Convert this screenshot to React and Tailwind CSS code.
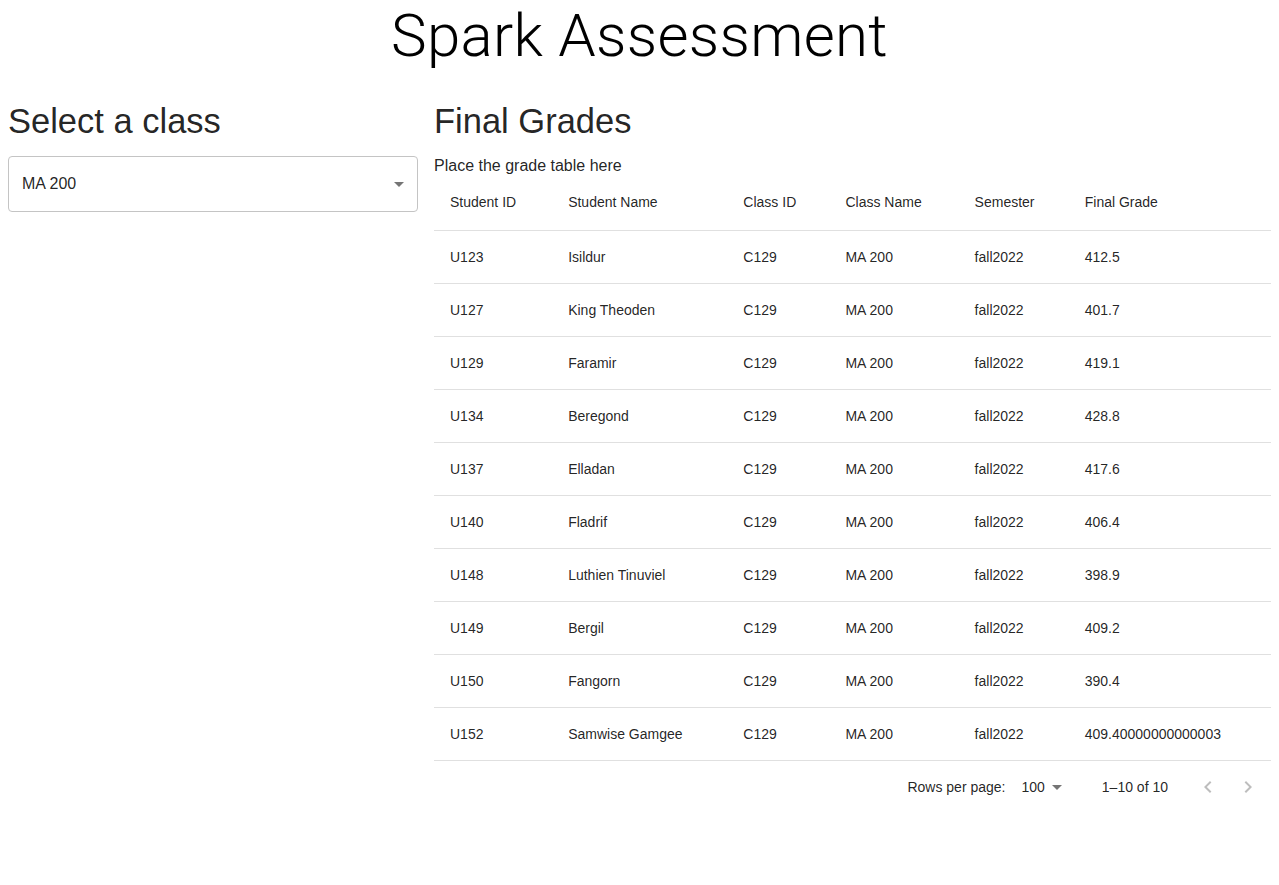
import React from "react";

const rows = [
  ["U123", "Isildur", "412.5"],
  ["U127", "King Theoden", "401.7"],
  ["U129", "Faramir", "419.1"],
  ["U134", "Beregond", "428.8"],
  ["U137", "Elladan", "417.6"],
  ["U140", "Fladrif", "406.4"],
  ["U148", "Luthien Tinuviel", "398.9"],
  ["U149", "Bergil", "409.2"],
  ["U150", "Fangorn", "390.4"],
  ["U152", "Samwise Gamgee", "409.40000000000003"],
];

const cols = [
  { label: "Student ID", w: "w-[118px]" },
  { label: "Student Name", w: "w-[175px]" },
  { label: "Class ID", w: "w-[102px]" },
  { label: "Class Name", w: "w-[129px]" },
  { label: "Semester", w: "w-[110px]" },
  { label: "Final Grade", w: "w-[202px]" },
];

function ArrowDrop({ className }) {
  return (
    <svg viewBox="0 0 24 24" className={className} fill="currentColor">
      <path d="M7 10l5 5 5-5z" />
    </svg>
  );
}

export default function App() {
  return (
    <div className="min-h-[885px] bg-white text-[rgba(0,0,0,0.87)] font-['Liberation_Sans',Arial,sans-serif] px-2">
      <h1 className="text-center text-[60px] leading-[72px] font-light font-['Roboto',sans-serif] tracking-[0.3px] m-0 text-black">
        Spark Assessment
      </h1>
      <div className="flex gap-4 mt-[28px]">
        <div className="w-[410px] shrink-0">
          <h2 className="text-[34.5px] leading-[42px] m-0">Select a class</h2>
          <div className="mt-[14px] h-[56px] border border-[#c4c4c4] rounded-[4px] flex items-center justify-between pl-[13px] pr-[6px]">
            <span className="text-[16px]">MA 200</span>
            <ArrowDrop className="w-6 h-6 text-[rgba(0,0,0,0.54)]" />
          </div>
        </div>
        <div className="flex-1 min-w-0">
          <h2 className="text-[34.5px] leading-[42px] m-0">Final Grades</h2>
          <p className="text-[16px] leading-[20px] mt-[14px] m-0">Place the grade table here</p>
          <table className="w-full border-collapse text-[14px] table-fixed">
            <thead>
              <tr className="border-b border-[#e0e0e0]">
                {cols.map((c) => (
                  <th
                    key={c.label}
                    className={`${c.w} text-left font-normal px-4 pt-[16px] pb-[18px] leading-[20px]`}
                  >
                    {c.label}
                  </th>
                ))}
              </tr>
            </thead>
            <tbody>
              {rows.map((r) => (
                <tr key={r[0]} className="border-b border-[#e0e0e0]">
                  <td className="px-4 py-4 leading-[20px]">{r[0]}</td>
                  <td className="px-4 py-4 leading-[20px]">{r[1]}</td>
                  <td className="px-4 py-4 leading-[20px]">C129</td>
                  <td className="px-4 py-4 leading-[20px]">MA 200</td>
                  <td className="px-4 py-4 leading-[20px]">fall2022</td>
                  <td className="px-4 py-4 leading-[20px]">{r[2]}</td>
                </tr>
              ))}
            </tbody>
          </table>
          <div className="h-[52px] flex items-center justify-end text-[14px] pr-[3px]">
            <span>Rows per page:</span>
            <div className="flex items-center ml-4">
              <span>100</span>
              <ArrowDrop className="w-6 h-6 text-[rgba(0,0,0,0.54)]" />
            </div>
            <span className="ml-[33px]">1–10 of 10</span>
            <div className="flex items-center ml-[20px] text-[rgba(0,0,0,0.26)]">
              <div className="w-10 h-10 flex items-center justify-center">
                <svg viewBox="0 0 24 24" className="w-6 h-6" fill="currentColor">
                  <path d="M15.41 16.59 10.83 12l4.58-4.59L14 6l-6 6 6 6 1.41-1.41z" />
                </svg>
              </div>
              <div className="w-10 h-10 flex items-center justify-center">
                <svg viewBox="0 0 24 24" className="w-6 h-6" fill="currentColor">
                  <path d="M8.59 16.59 13.17 12 8.59 7.41 10 6l6 6-6 6-1.41-1.41z" />
                </svg>
              </div>
            </div>
          </div>
        </div>
      </div>
    </div>
  );
}
